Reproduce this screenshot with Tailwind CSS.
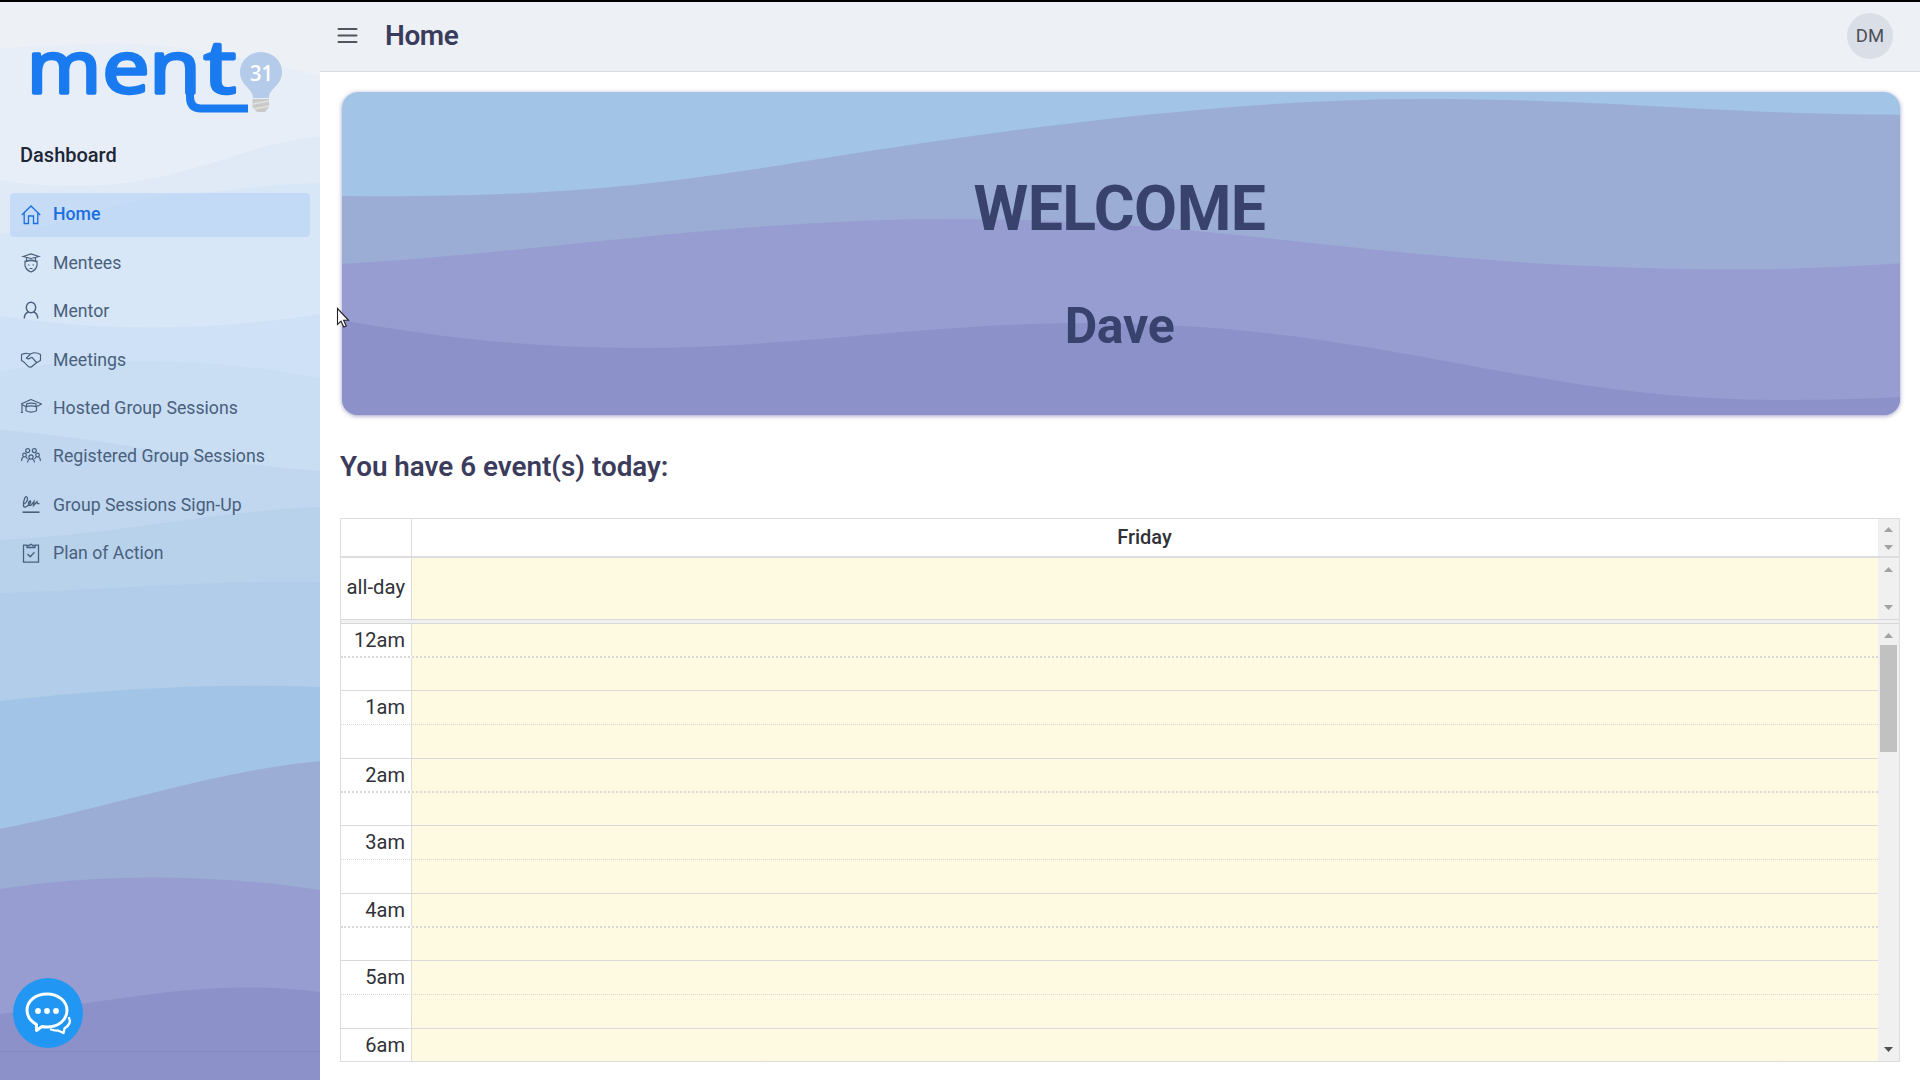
<!DOCTYPE html>
<html lang="en">
<head>
<meta charset="utf-8">
<title>Home</title>
<script src="https://cdn.jsdelivr.net/npm/@tailwindcss/browser@4"></script>
</head>
<body class="h-screen overflow-hidden bg-white font-['Roboto',sans-serif]">
<div class="flex h-screen border-t-2 border-black">

  <aside class="relative isolate flex h-full w-80 shrink-0 flex-col">
    <svg class="absolute inset-0 -z-10 h-full w-full" viewBox="0 2 320 1078" preserveAspectRatio="none">
      <rect width="320" height="1080" fill="#edf1f6"/>
      <path fill="#e7eef7" d="M0 48Q60 45 110 43Q200 44 320 76V1080H0z"/>
      <path fill="#dfeaf6" d="M0 180C60 190 120 188 180 172S260 144 320 136V1080H0z"/>
      <path fill="#d8e7f7" d="M0 234C60 228 120 198 180 194S270 184 320 183V1080H0z"/>
      <path fill="#cfe1f6" d="M0 316C90 330 200 333 320 314V1080H0z"/>
      <path fill="#c9ddf3" d="M0 372C60 358 200 354 320 378V1080H0z"/>
      <path fill="#c1d7ef" d="M0 430C110 438 200 463 320 471V1080H0z"/>
      <path fill="#b8d2ec" d="M0 540C140 532 200 512 320 507V1080H0z"/>
      <path fill="#b1cdea" d="M0 593C110 590 210 580 320 582V1080H0z"/>
      <path fill="#a2c4e6" d="M0 701C100 690 210 683 320 687V1080H0z"/>
      <path fill="#9bacd5" d="M0 829C120 805 210 772 320 761V1080H0z"/>
      <path fill="#979dd1" d="M0 889C90 875 200 872 320 890V1080H0z"/>
      <path fill="#8c92c9" d="M0 1014C110 1004 200 977 320 992V1080H0z"/>
      <rect y="1051" width="320" height="1" fill="#858ac0"/>
    </svg>

    <svg class="ml-4 h-[130px] w-[280px]" viewBox="16 2 280 130">
      <g fill="#1a7af0" stroke="#1a7af0" stroke-width="3.500" stroke-linejoin="round" font-family="Open Sans, sans-serif" font-weight="500" font-size="73">
        <text x="27" y="93.300" textLength="74" lengthAdjust="spacingAndGlyphs">m</text>
        <text x="102.500" y="93.300" textLength="47" lengthAdjust="spacingAndGlyphs">e</text>
        <text x="149.500" y="93.300" textLength="51" lengthAdjust="spacingAndGlyphs">n</text>
        <text x="204" y="93.300" textLength="32" lengthAdjust="spacingAndGlyphs">t</text>
      </g>
      <path d="M190 86V97Q190 108.500 201 108.500H248" fill="none" stroke="#1a7af0" stroke-width="8"/>
      <path d="M253 98C253 88 240 86 240 72A21 20 0 0 1 282 72C282 86 269 88 269 98z" fill="#b4cbea"/>
      <path d="M252.500 99H269V107L265 112H257L252.500 107z" fill="#c9c9c9"/>
      <path d="M253 104L269 101M254 109L269 106" stroke="#e4e1dc" stroke-width="1.500"/>
      <text x="250" y="80.500" fill="#fff" font-family="Open Sans, sans-serif" font-weight="600" font-size="22" textLength="23" lengthAdjust="spacingAndGlyphs">31</text>
    </svg>

    <h2 class="mt-2 ml-5 text-[20px] leading-[30px] font-medium text-[#1d2636]">Dashboard</h2>

    <nav class="mt-[22.5px] flex flex-col gap-1 px-2.5 text-[17.7px] text-[#48607c]">
      <a class="flex h-[44.4px] items-center gap-[12px] rounded bg-[#bad4f6]/70 pl-[11px] font-medium text-[#1a6fe0]">
        <svg class="size-5 fill-none stroke-current" viewBox="0 0 20 20" stroke-width="1.3"><path d="M.8 10 10 1l9.200 9M3.200 8v10.500h4.300v-7.500h5v7.500h4.300V8"/></svg>Home</a>
      <a class="flex h-[44.4px] items-center gap-[12px] pl-[11px]">
        <svg class="size-5 fill-none stroke-current" viewBox="0 0 20 20" stroke-width="1.2"><path d="M2 3.500 10 1l8 2.500-8 2zM5.500 4.500V8q4.500-1.700 9 0V4.500M4 7.500v5q1 4.500 6 6.500 5-2 6-6.500v-5M4 9q6-2.500 12 0M7 12h1.500M11.500 12H13M8.500 15.500h3"/></svg>Mentees</a>
      <a class="flex h-[44.4px] items-center gap-[12px] pl-[11px]">
        <svg class="size-5 fill-none stroke-current" viewBox="0 0 20 20" stroke-width="1.4"><ellipse cx="10" cy="6.500" rx="4.700" ry="5.200"/><path d="M3.300 17.500c0-4 2-5.800 4.200-6.500M16.700 17.500c0-4-2-5.800-4.200-6.500"/></svg>Mentor</a>
      <a class="flex h-[44.4px] items-center gap-[12px] pl-[11px]">
        <svg class="size-5 overflow-visible fill-none stroke-current" viewBox="0 0 20 20" stroke-width="1.2" stroke-linejoin="round"><path d="M.5 4.500q3.500-1.500 6-1l3 .5 3-1.200q4-.3 7 1.700v6l-4 2.200-5.500 4.500-2.500-.5-5-5-2-1.200zM9.500 4 5.500 8q1.500 1.800 4 0l1.500-.7 4.500 5.200"/></svg>Meetings</a>
      <a class="flex h-[44.4px] items-center gap-[12px] pl-[11px]">
        <svg class="size-5 overflow-visible fill-none stroke-current" viewBox="0 0 20 20" stroke-width="1.2" stroke-linejoin="round"><path d="M0 6 10 1.500 20.500 6 15 9V5.800q-5-1.500-9.500 0V9L1 6.500V14M5 8.800v4q5 2.500 10.500 0v-4Q10 7 5 8.800zM-.3 14.500H2"/></svg>Hosted Group Sessions</a>
      <a class="flex h-[44.4px] items-center gap-[12px] pl-[11px]">
        <svg class="size-5 overflow-visible fill-none stroke-current" viewBox="0 0 20 20" stroke-width="1.200"><circle cx="6.700" cy="3.600" r="2"/><circle cx="13.300" cy="3.600" r="2"/><circle cx="3.500" cy="8" r="1.800"/><circle cx="16.500" cy="8" r="1.800"/><circle cx="10" cy="10" r="2.100"/><path d="M.5 14q0-3 2-4.200M19.500 14q0-3-2-4.200M4.800 9.800 6.500 12M15.200 9.800 13.500 12M6.500 15.500q0-2.600 2.300-3.800M13.500 15.500q0-2.600-2.300-3.800"/></svg>Registered Group Sessions</a>
      <a class="flex h-[44.4px] items-center gap-[12px] pl-[11px]">
        <svg class="size-5 fill-none stroke-current" viewBox="0 0 20 20" stroke-width="1.3"><path d="M2 9.500Q6.500 7.500 6.500 3.500 6 .5 4 2.500 2 7 2.500 11q1 2.500 4.500-.5 3.500-3 2.500-4.500-2 0-2 3 .5 3.500 4-.5l1.500-2-.5 4 3.500-3.800.5 2h2"/><path d="M1.500 17.200h17" stroke-width="1.600"/></svg>Group Sessions Sign-Up</a>
      <a class="flex h-[44.4px] items-center gap-[12px] pl-[11px]">
        <svg class="size-5 fill-none stroke-current" viewBox="0 0 20 20" stroke-width="1.300"><path d="M6 2.200H2.500v17h15v-17H14M6 4.500v-2h2.500Q10 0 11.500 2.500H14v2zM6.500 11l2.700 2.800 4.300-4.600"/></svg>Plan of Action</a>
    </nav>

    <button class="absolute bottom-8 left-[13px] flex size-[70px] items-center justify-center rounded-full bg-[#2197f3]" aria-label="Chat">
      <svg class="size-[70px] fill-none stroke-white" viewBox="0 0 70 70" stroke-width="2.900" stroke-linejoin="round" stroke-linecap="round"><path d="M23.500 52.500V46.500Q14 41 14 32.500C14 22.500 23 16 34 16S54 23 54 32.500 45 49 34 49Q31 49 29 48.500z"/><path d="M56 40Q59 45.500 51.500 50.500L50.500 55 45 52.500Q41 52.700 38 51.500" stroke-width="2.300"/><g fill="#fff" stroke="none"><circle cx="25" cy="33" r="2.900"/><circle cx="34" cy="33" r="2.900"/><circle cx="43" cy="33" r="2.900"/></g></svg>
    </button>
  </aside>

  <div class="flex min-w-0 flex-1 flex-col">
    <header class="flex h-[70px] shrink-0 items-center border-b border-[#d9dde3] bg-[#edf1f5] pr-[27px] pb-[2px] pl-[17px]">
      <svg class="size-[21px] stroke-[#51555d]" viewBox="0 0 21 21" stroke-width="2" stroke-linecap="round"><path d="M1.500 4h18M1.500 10.500h18M1.500 17h18"/></svg>
      <h1 class="ml-[27px] text-[28px] font-semibold tracking-[-0.4px] text-[#3b3c5c]">Home</h1>
      <div class="ml-auto flex size-[46px] items-center justify-center rounded-full bg-[#d9dee7] pt-0.5 text-[18.5px] text-[#4b4f58]">DM</div>
    </header>

    <main class="flex flex-1 flex-col pr-5 pl-5">
      <section class="relative isolate mt-5 ml-0.5 flex h-[323px] flex-col items-center overflow-hidden rounded-2xl pr-[3px] text-[#38426d] shadow-[0_1px_4px_rgba(60,60,130,0.5)]">
        <svg class="absolute inset-0 -z-10 h-full w-full" viewBox="22 66 1526 969" preserveAspectRatio="none">
          <rect x="22" y="66" width="1526" height="969" fill="#a2c4e6"/>
          <path fill="#9bacd5" d="M22 378C250 385 350 335 500 262S880 87 1080 87C1270 87 1370 134 1548 134V1035H22z"/>
          <path fill="#979dd1" d="M22 581C180 560 400 447 620 447C900 447 1050 598 1390 598C1450 598 1500 590 1548 580V1035H22z"/>
          <path fill="#8c92c9" d="M22 750C100 795 200 834 310 834C460 834 600 759 750 759C1040 759 1180 990 1430 990C1480 990 1520 986 1548 981V1035H22z"/>
        </svg>
        <p class="mt-[77px] text-[62.5px] leading-20 font-bold tracking-[-0.5px]">WELCOME</p>
        <p class="mt-[45px] text-[50px] leading-[64px] font-bold tracking-[-0.3px]">Dave</p>
      </section>

      <h2 class="mt-[34px] text-[27.8px] leading-9 font-semibold text-[#3b3c5c]">You have 6 event(s) today:</h2>

      <section class="mt-[33px] flex h-[544px] flex-col border border-[#dddddd] text-[20px] text-[#2f3237]">
        <div class="flex h-[39px] border-b-2 border-[#dddddd]">
          <div class="w-[71px] border-r border-[#dddddd]"></div>
          <div class="flex flex-1 items-center justify-center pr-px pb-0.5 font-medium">Friday</div>
          <div class="flex w-[21px] flex-col items-center justify-between bg-[#f0f0f0] pt-2 pb-1.5">
            <svg class="h-[5px] w-[9px] fill-[#a3a3a3]" viewBox="0 0 9 5"><path d="M0 5 4.500 0 9 5z"/></svg>
            <svg class="h-[5px] w-[9px] fill-[#a3a3a3]" viewBox="0 0 9 5"><path d="M0 0 4.500 5 9 0z"/></svg>
          </div>
        </div>
        <div class="flex h-[61px]">
          <div class="flex w-[71px] items-center justify-end border-r border-[#dddddd] pr-[6px] pb-0.5 text-[20.3px]">all-day</div>
          <div class="flex-1 bg-[#fef9e1]"></div>
          <div class="flex w-[21px] flex-col items-center justify-between bg-[#f0f0f0] pt-[9px] pb-[9px]">
            <svg class="h-[5px] w-[9px] fill-[#a3a3a3]" viewBox="0 0 9 5"><path d="M0 5 4.500 0 9 5z"/></svg>
            <svg class="h-[5px] w-[9px] fill-[#a3a3a3]" viewBox="0 0 9 5"><path d="M0 0 4.500 5 9 0z"/></svg>
          </div>
        </div>
        <div class="h-[5px] shrink-0 border-y border-[#d8d8d8] bg-[#f0f0f0]"></div>
        <div class="flex min-h-0 flex-1">
          <div id="slots" class="relative flex-1 overflow-hidden bg-linear-to-r from-white from-[71px] to-[#fef9e1] to-[71px]"></div>
          <div class="flex w-[21px] flex-col items-center bg-[#f0f0f0] pt-[9px] pb-[9px]">
            <svg class="h-[5px] w-[9px] fill-[#a3a3a3]" viewBox="0 0 9 5"><path d="M0 5 4.500 0 9 5z"/></svg>
            <div class="mt-[7px] h-[107px] w-[17px] bg-[#c1c1c1]"></div>
            <svg class="mt-auto h-[5px] w-[9px] fill-[#505050]" viewBox="0 0 9 5"><path d="M0 0 4.500 5 9 0z"/></svg>
          </div>
        </div>
      </section>
    </main>
  </div>
</div>

<svg class="absolute top-[307px] left-[336px] h-[21px] w-[14px]" viewBox="0 0 14 21"><path d="M1.500 1.500V17.500L5 14.200 7.800 20 10.200 19 7.600 13.300H12.500z" fill="#fff" stroke="#222" stroke-width="1.100"/></svg>

<script>
  const hours = ['12am', '1am', '2am', '3am', '4am', '5am', '6am'];
  document.getElementById('slots').innerHTML = hours.map((h, i) => `
    <div class="flex ${i ? 'h-[33.75px] border-t border-[#dadada]' : 'h-[32.25px]'}">
      <div class="flex w-[71px] shrink-0 items-center justify-end border-r border-[#dddddd] pr-[6px]">${h}</div>
    </div>
    <div class="flex h-[33.75px] border-dotted border-[#d9d9d4] ${i % 2 ? 'border-t' : 'border-t-2'}">
      <div class="w-[71px] shrink-0 border-r border-solid border-[#dddddd]"></div>
    </div>`).join('');
</script>
</body>
</html>
